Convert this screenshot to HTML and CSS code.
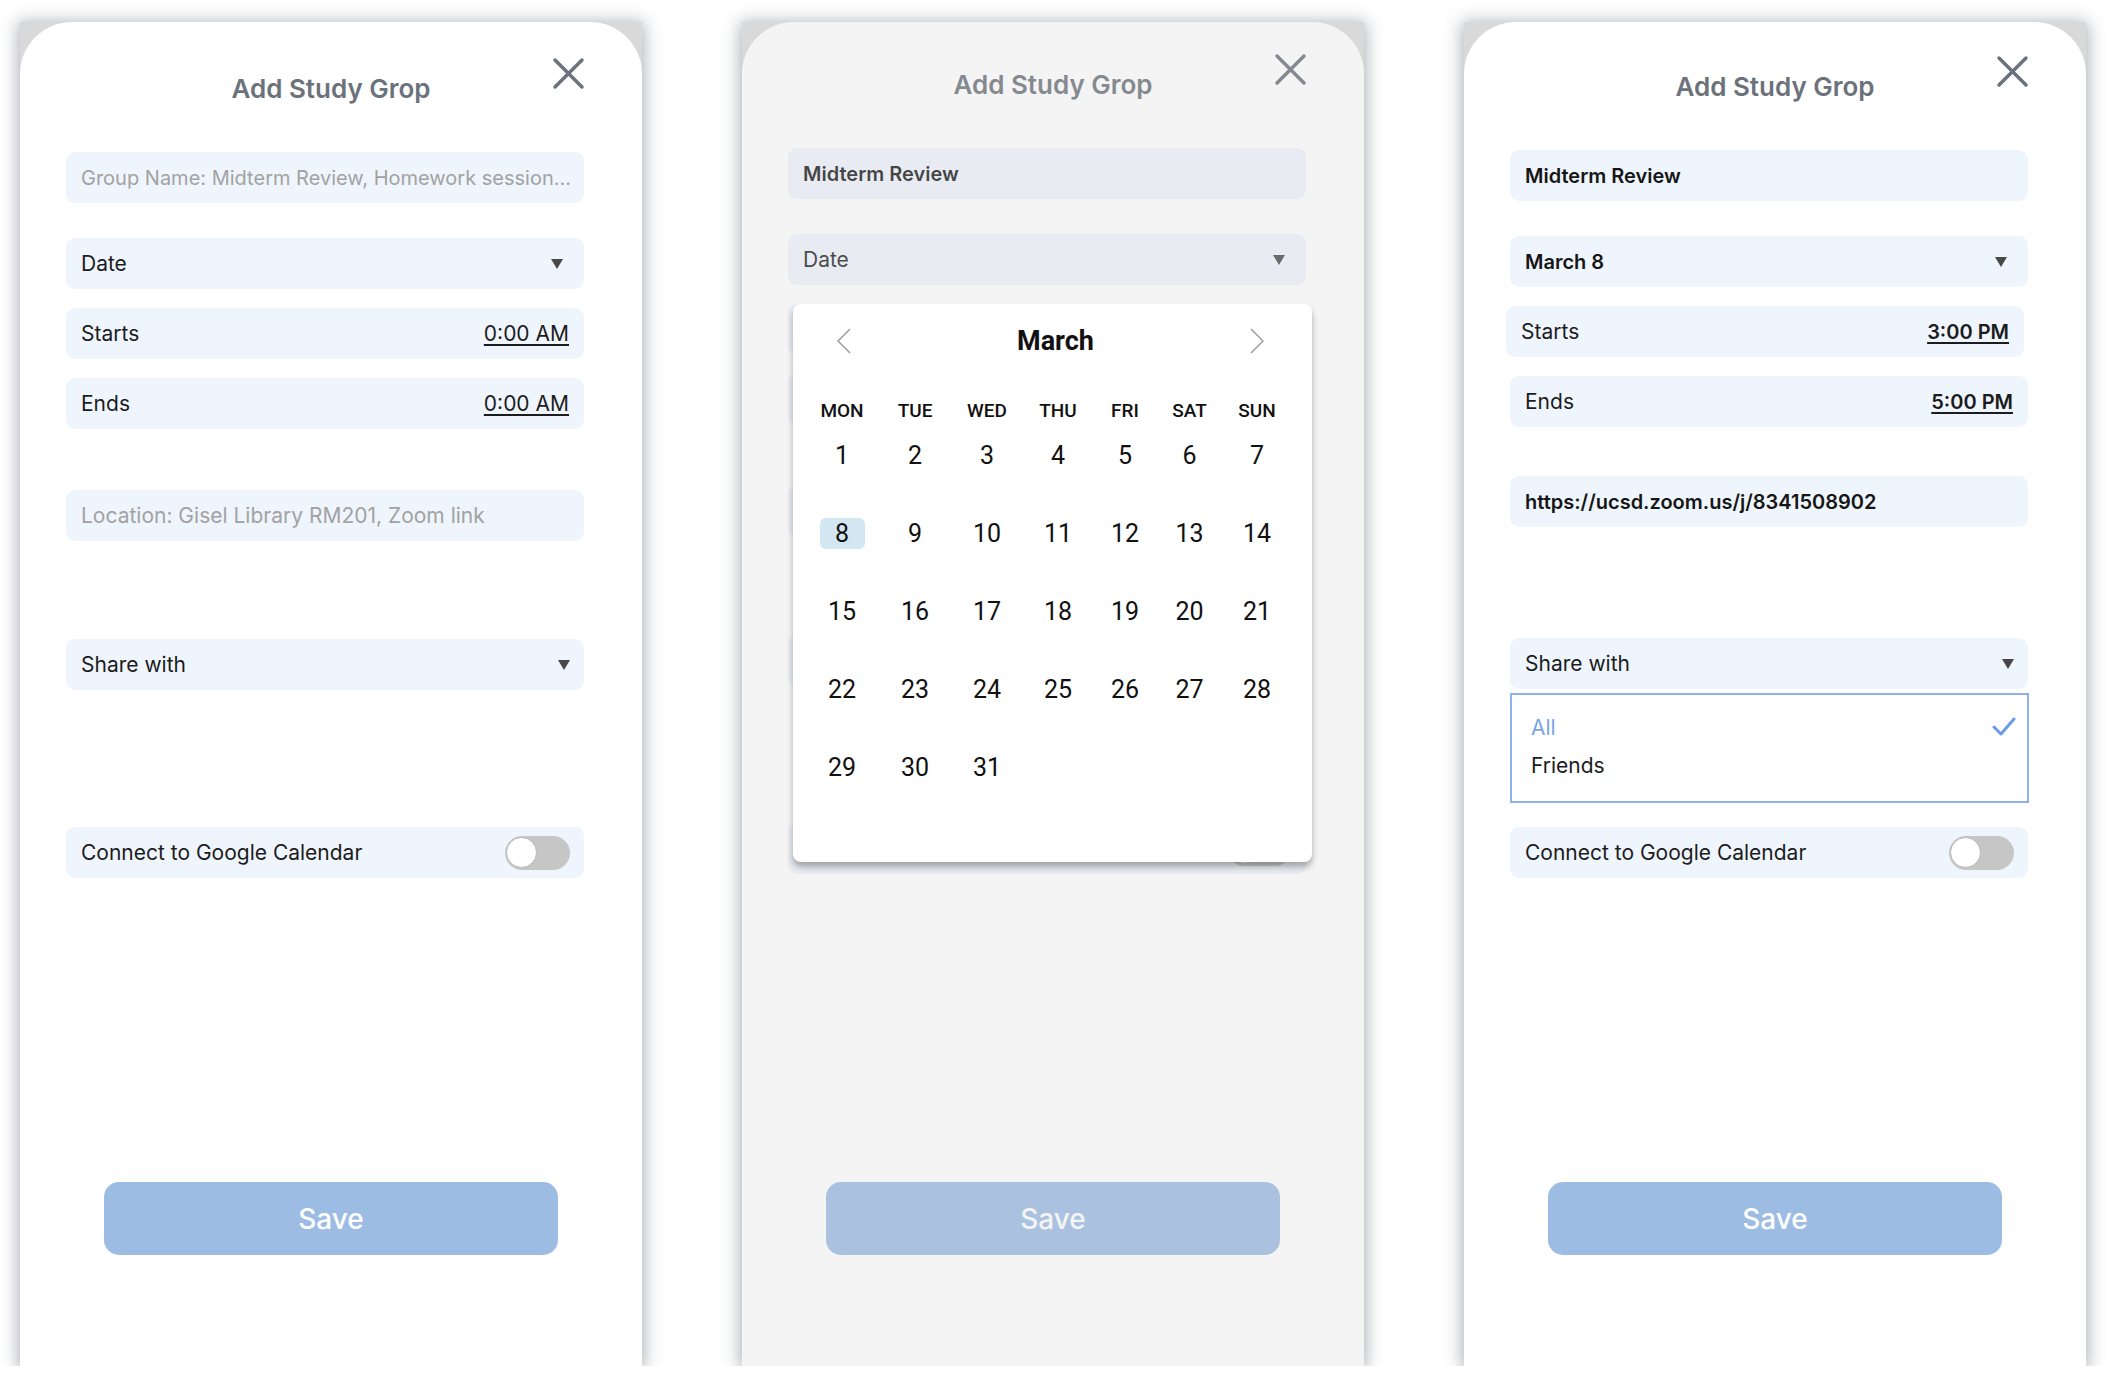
FILE: index.html
```html
<!DOCTYPE html>
<html lang="en">
<head>
	<meta charset="UTF-8">
	<title>Add Study Group</title>
	<link rel="stylesheet" href="styles.css">
</head>
<body>
<div class="board">

	<!-- empty form -->
	<div class="frame">
		<div class="card card-a">
			<div class="head">
				<span></span>
				<h1 class="title">Add Study Grop</h1>
				<svg class="close" width="33" height="33" viewBox="0 0 33 33"><path d="M3 3L30 30M30 3L3 30"/></svg>
			</div>
			<div class="field field-name hint">Group Name: Midterm Review, Homework session...</div>
			<div class="field field-date"><span>Date</span><i class="caret"></i></div>
			<div class="field field-time"><span>Starts</span><u>0:00 AM</u></div>
			<div class="field field-time"><span>Ends</span><u>0:00 AM</u></div>
			<div class="field field-place hint">Location: Gisel Library RM201, Zoom link</div>
			<div class="field field-share"><span>Share with</span><i class="caret"></i></div>
			<div class="field field-cal"><span>Connect to Google Calendar</span><span class="switch"><span class="knob"></span></span></div>
			<button class="save">Save</button>
		</div>
	</div>

	<!-- date picker open -->
	<div class="frame">
		<div class="card card-b">
			<div class="head">
				<span></span>
				<h1 class="title">Add Study Grop</h1>
				<svg class="close" width="33" height="33" viewBox="0 0 33 33"><path d="M3 3L30 30M30 3L3 30"/></svg>
			</div>
			<div class="field field-name filled">Midterm Review</div>
			<div class="field field-date"><span>Date</span><i class="caret"></i></div>
			<!-- rows under the picker, only their edges show -->
			<div class="field field-time"></div>
			<div class="field field-time"></div>
			<div class="field field-place"></div>
			<div class="field field-share"></div>
			<div class="field field-cal"><span>Connect to Google Calendar</span><span class="switch"><span class="knob"></span></span></div>
			<button class="save">Save</button>

			<div class="dim"></div>

			<div class="picker">
				<div class="picker-head">
					<svg class="chev" width="14" height="26" viewBox="0 0 14 26"><path d="M13 1L1 13L13 25"/></svg>
					<b class="month">March</b>
					<svg class="chev" width="14" height="26" viewBox="0 0 14 26"><path d="M1 1L13 13L1 25"/></svg>
				</div>
				<div class="weekdays">
					<span>MON</span><span>TUE</span><span>WED</span><span>THU</span><span>FRI</span><span>SAT</span><span>SUN</span>
				</div>
				<div class="days">
					<span>1</span><span>2</span><span>3</span><span>4</span><span>5</span><span>6</span><span>7</span>
					<span><em class="sel">8</em></span><span>9</span><span>10</span><span>11</span><span>12</span><span>13</span><span>14</span>
					<span>15</span><span>16</span><span>17</span><span>18</span><span>19</span><span>20</span><span>21</span>
					<span>22</span><span>23</span><span>24</span><span>25</span><span>26</span><span>27</span><span>28</span>
					<span>29</span><span>30</span><span>31</span>
				</div>
			</div>
		</div>
	</div>

	<!-- filled form -->
	<div class="frame">
		<div class="card card-c">
			<div class="head">
				<span></span>
				<h1 class="title">Add Study Grop</h1>
				<svg class="close" width="33" height="33" viewBox="0 0 33 33"><path d="M3 3L30 30M30 3L3 30"/></svg>
			</div>
			<div class="field field-name filled">Midterm Review</div>
			<div class="field field-date filled"><span>March 8</span><i class="caret"></i></div>
			<div class="field field-time field-start"><span>Starts</span><u class="strong">3:00 PM</u></div>
			<div class="field field-time"><span>Ends</span><u class="strong">5:00 PM</u></div>
			<div class="field field-place filled">https://ucsd.zoom.us/j/8341508902</div>
			<div class="field field-share"><span>Share with</span><i class="caret"></i></div>
			<ul class="options">
				<li class="on">All<svg width="24" height="20" viewBox="0 0 24 20"><path d="M2 10L9 17L22 2"/></svg></li>
				<li>Friends</li>
			</ul>
			<div class="field field-cal"><span>Connect to Google Calendar</span><span class="switch"><span class="knob"></span></span></div>
			<button class="save">Save</button>
		</div>
	</div>

</div>
</body>
</html>
```

FILE: styles.css
```css
*{
	margin:0;
	padding:0;
	box-sizing:border-box;
}

body{
	background:#fff;
	font-family:"Inter","Open Sans",sans-serif;
	color:#1c1c1c;
}

.board{
	display:flex;
	gap:100px;
	padding:22px 0 0 20px;
}

.frame{
	width:622px;
	height:1344px;
	background:#d9d9d9;
	box-shadow:0 2px 16px 2px rgba(70,80,90,0.45);
}

.card{
	position:relative;
	height:100%;
	background:#fff;
	border-radius:52px 52px 0 0;
	display:flex;
	flex-direction:column;
	padding-top:35px;
}
.card-b{ padding-top:31px; }
.card-c{ padding-top:33px; }

/* header */
.head{
	display:grid;
	grid-template-columns:1fr auto 1fr;
	height:95px;
}
.title{
	margin-top:16px;
	font-size:26px;
	line-height:32px;
	font-weight:600;
	color:#6b727b;
}
.close{
	justify-self:end;
	margin-right:57px;
}
.close path{
	stroke:#6b727b;
	stroke-width:3.5;
	stroke-linecap:round;
	fill:none;
}

/* rows */
.field{
	margin-left:46px;
	width:518px;
	height:51px;
	flex:none;
	border-radius:9px;
	background:#eff5fc;
	display:flex;
	align-items:center;
	justify-content:space-between;
	padding:0 15px;
	font-size:21px;
	white-space:nowrap;
	overflow:hidden;
}
.hint{ color:#a2a2a2; }
.field-name.hint{ font-size:20px; padding-right:4px; }
.filled{ font-size:20px; font-weight:600; color:#161616; }

.field-date{ margin-top:35px; padding-right:21px; }
.field-time{ margin-top:19px; }
.field-place{ margin-top:61px; }
.field-share{ margin-top:98px; padding-right:14px; }
.field-cal{ margin-top:137px; padding-right:14px; }

.card-c .field-start{ margin-left:42px; }
.card-c .field-place{ margin-top:49px; }
.card-c .field-share{ margin-top:111px; }
.card-c .field-cal{ margin-top:24px; }

.field u{
	text-decoration:underline;
	text-underline-offset:3px;
}
.field u.strong{ font-size:20px; font-weight:600; }

.caret{
	width:0;
	height:0;
	border-left:6px solid transparent;
	border-right:6px solid transparent;
	border-top:10px solid #484848;
}

.switch{
	width:65px;
	height:34px;
	border-radius:17px;
	background:#c6c6c6;
	display:flex;
	align-items:center;
	padding:0 1px;
}
.knob{
	width:31px;
	height:31px;
	border-radius:50%;
	background:#fff;
	border:1px solid #b9b9b9;
}

/* share options */
.options{
	list-style:none;
	margin:4px 0 0 46px;
	width:519px;
	height:110px;
	flex:none;
	border:2px solid #8eb2ec;
	background:#fff;
	padding:13px 11px 0 19px;
	font-size:21px;
}
.options li{
	height:38px;
	display:flex;
	align-items:center;
	justify-content:space-between;
}
.options li.on{ color:#7aa4e7; }
.options svg path{
	fill:none;
	stroke:#6b9be8;
	stroke-width:3;
	stroke-linecap:round;
	stroke-linejoin:round;
}

.save{
	margin:auto 0 111px 84px;
	width:454px;
	height:73px;
	flex:none;
	border:none;
	border-radius:15px;
	background:#9dbce3;
	color:#fff;
	font-family:inherit;
	font-size:28px;
	font-weight:500;
}

/* date picker state */
.dim{
	position:absolute;
	top:0;
	left:0;
	right:0;
	bottom:0;
	border-radius:52px 52px 0 0;
	background:rgba(210,210,210,0.25);
}

.picker{
	position:absolute;
	left:51px;
	top:282px;
	width:519px;
	height:558px;
	background:#fff;
	border-radius:8px;
	box-shadow:0 5px 6px rgba(0,0,0,0.3);
	font-family:Roboto,sans-serif;
	color:#111;
}
.picker-head{
	height:74px;
	display:flex;
	align-items:center;
	justify-content:space-between;
	padding:0 48px 0 44px;
}
.month{
	font-size:27px;
	font-weight:700;
	padding-left:10px;
}
.chev path{
	fill:none;
	stroke:#9a9da3;
	stroke-width:1.5;
}

.weekdays,
.days{
	display:grid;
	grid-template-columns:74px 72px 72px 70px 64px 65px 70px;
	padding-left:12px;
	text-align:center;
}
.weekdays{
	margin-top:21px;
	height:24px;
	font-size:19px;
	line-height:24px;
	font-weight:500;
}
.days{
	row-gap:14px;
	font-size:25px;
}
.days span{
	height:64px;
	display:flex;
	align-items:center;
	justify-content:center;
}
.sel{
	font-style:normal;
	width:45px;
	height:31px;
	line-height:31px;
	border-radius:6px;
	background:#d3e7f2;
}
```
